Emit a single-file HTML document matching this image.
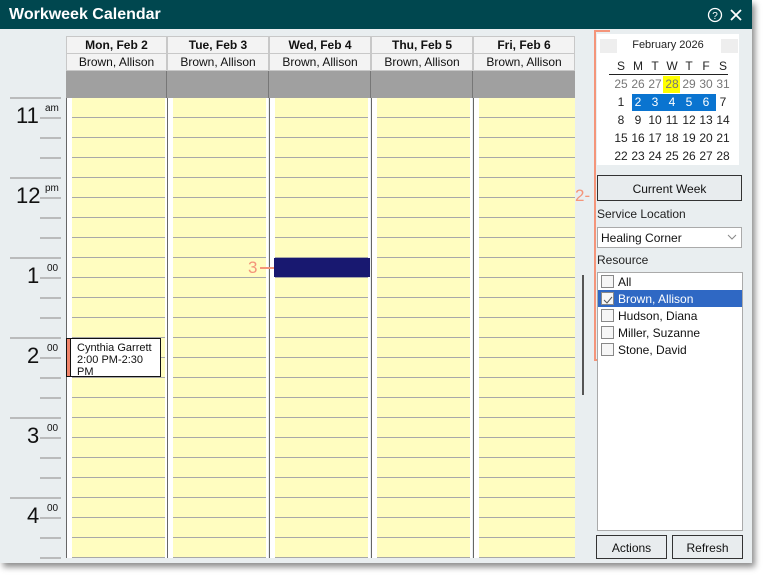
<!DOCTYPE html>
<html><head><style>
*{margin:0;padding:0;box-sizing:border-box}
body{width:765px;height:579px;background:#fff;font-family:"Liberation Sans",sans-serif;position:relative;overflow:hidden}
.win{position:absolute;left:0;top:0;width:752px;height:563px;background:#e9eef0;box-shadow:3px 4px 6px rgba(0,0,0,.45)}
.title{position:absolute;left:0;top:0;width:752px;height:29px;background:#00474f;color:#fff;font-weight:bold;font-size:16px;padding:6px 9px}
.a{position:absolute}
.hd{position:absolute;background:#f3f3f3;border:1px solid #c8c8c8;font-size:12px;text-align:center;color:#111}
.col{position:absolute;top:98px;height:460px;width:101px;background:#fff;border-left:1px solid #666}
.col .y{position:absolute;left:5px;right:2px;top:0;bottom:0;background:repeating-linear-gradient(#a8a8a8 0 1px,#fffdc0 1px 20px);background-position:0 -1px}
.btn{position:absolute;background:#e8ecee;border:1px solid #333;font-size:12px;text-align:center;color:#111}
.cal{position:absolute;left:597px;top:34px;width:142px;height:131px;background:#fff;font-size:12px;color:#222}
.cal span{position:absolute;width:20px;text-align:center}
.cb{position:absolute;left:3px;width:13px;height:13px;border:1px solid #888;background:#f6f6f6}
.li{position:absolute;left:0;width:144px;height:17px;font-size:12px;padding:2px 0 0 20px;color:#111}
</style></head><body>
<div class="win">
<div class="title">Workweek Calendar</div>
<svg class="a" style="left:707px;top:7px" width="36" height="16"><circle cx="8" cy="8" r="6.5" fill="none" stroke="#fff" stroke-width="1.3"/><text x="8" y="12" font-size="10" fill="#fff" text-anchor="middle" font-family="Liberation Sans">?</text><path d="M24 3l10 10M34 3l-10 10" stroke="#fff" stroke-width="1.8"/></svg>

<div class="hd" style="left:66px;top:36px;width:101px;height:18px;font-weight:bold;padding-top:1px">Mon, Feb 2</div>
<div class="hd" style="left:167px;top:36px;width:102px;height:18px;font-weight:bold;padding-top:1px">Tue, Feb 3</div>
<div class="hd" style="left:269px;top:36px;width:102px;height:18px;font-weight:bold;padding-top:1px">Wed, Feb 4</div>
<div class="hd" style="left:371px;top:36px;width:102px;height:18px;font-weight:bold;padding-top:1px">Thu, Feb 5</div>
<div class="hd" style="left:473px;top:36px;width:102px;height:18px;font-weight:bold;padding-top:1px">Fri, Feb 6</div>
<div class="hd" style="left:66px;top:53px;width:101px;height:18px;padding-top:1px">Brown, Allison</div>
<div class="hd" style="left:167px;top:53px;width:102px;height:18px;padding-top:1px">Brown, Allison</div>
<div class="hd" style="left:269px;top:53px;width:102px;height:18px;padding-top:1px">Brown, Allison</div>
<div class="hd" style="left:371px;top:53px;width:102px;height:18px;padding-top:1px">Brown, Allison</div>
<div class="hd" style="left:473px;top:53px;width:102px;height:18px;padding-top:1px">Brown, Allison</div>
<div class="a" style="left:66px;top:71px;width:509px;height:27px;background:#a0a0a0"></div>
<div class="a" style="left:166px;top:71px;width:1px;height:27px;background:#777"></div>
<div class="a" style="left:268px;top:71px;width:1px;height:27px;background:#777"></div>
<div class="a" style="left:370px;top:71px;width:1px;height:27px;background:#777"></div>
<div class="a" style="left:472px;top:71px;width:1px;height:27px;background:#777"></div>

<div class="col" style="left:66px"><div class="y"></div></div>
<div class="col" style="left:167px"><div class="y"></div></div>
<div class="col" style="left:269px"><div class="y"></div></div>
<div class="col" style="left:371px"><div class="y"></div></div>
<div class="col" style="left:473px;width:102px"><div class="y" style="right:0"></div></div>

<svg class="a" style="left:0;top:90px" width="66" height="470">
<g stroke="#aaa" stroke-width="1.5">
<path d="M10 8H61M10 88H61M10 168H61M10 248H61M10 328H61M10 408H61"/>
<path d="M40 28H61M40 48H61M40 68H61M40 108H61M40 128H61M40 148H61M40 188H61M40 208H61M40 228H61M40 268H61M40 288H61M40 308H61M40 348H61M40 368H61M40 388H61M40 428H61M40 448H61M40 468H61"/>
</g>
<g font-family="Liberation Sans" fill="#111">
<text x="16" y="33" font-size="22">11</text><text x="45" y="21" font-size="10">am</text>
<text x="16" y="113" font-size="22">12</text><text x="45" y="101" font-size="10">pm</text>
<text x="27" y="193" font-size="22">1</text><text x="47" y="181" font-size="10">00</text>
<text x="27" y="273" font-size="22">2</text><text x="47" y="261" font-size="10">00</text>
<text x="27" y="353" font-size="22">3</text><text x="47" y="341" font-size="10">00</text>
<text x="27" y="433" font-size="22">4</text><text x="47" y="421" font-size="10">00</text>
</g></svg>

<div class="a" style="left:66px;top:338px;width:95px;height:39px;background:#fff;border:1px solid #111;font-size:11px;line-height:12px;padding:3px 0 0 10px;color:#111;overflow:hidden">Cynthia Garrett<br>2:00 PM-2:30<br>PM</div>
<div class="a" style="left:66px;top:338px;width:5px;height:39px;background:#f0846a;border:1px solid #111"></div>
<div class="a" style="left:274px;top:258px;width:96px;height:19px;background:#181870"></div>
<div class="a" style="left:248px;top:258px;font-size:17px;color:#f4957a">3</div>
<div class="a" style="left:260px;top:267px;width:14px;height:2px;background:#f4957a"></div>

<div class="a" style="left:582px;top:275px;width:2px;height:120px;background:#555"></div>

<div class="a" style="left:594px;top:30px;width:2px;height:331px;background:#f4957a"></div>
<div class="a" style="left:594px;top:30px;width:16px;height:2px;background:#f4957a"></div>
<div class="a" style="left:594px;top:359px;width:16px;height:2px;background:#f4957a"></div>
<div class="a" style="left:575px;top:186px;font-size:17px;color:#f4957a">2-</div>

<div class="cal">
<div class="a" style="left:3px;top:5px;width:17px;height:14px;background:#eee"></div>
<div class="a" style="left:124px;top:5px;width:17px;height:14px;background:#eee"></div>
<div class="a" style="left:0;top:5px;width:142px;text-align:center;font-size:11px">February 2026</div>
<div class="a" style="left:12px;top:40px;width:119px;height:1px;background:#222"></div>
<div class="a" style="left:66px;top:42px;width:17px;height:17px;background:#ffff00"></div>
<div class="a" style="left:35px;top:60px;width:84px;height:17px;background:#0a74d0"></div>
<div style="position:absolute;left:0;top:0">
<span style="left:14px;top:25px">S</span><span style="left:31px;top:25px">M</span><span style="left:48px;top:25px">T</span><span style="left:65px;top:25px">W</span><span style="left:82px;top:25px">T</span><span style="left:99px;top:25px">F</span><span style="left:116px;top:25px">S</span>
<span style="left:14px;top:43px;color:#777">25</span><span style="left:31px;top:43px;color:#777">26</span><span style="left:48px;top:43px;color:#777">27</span><span style="left:65px;top:43px;color:#777">28</span><span style="left:82px;top:43px;color:#777">29</span><span style="left:99px;top:43px;color:#777">30</span><span style="left:116px;top:43px;color:#777">31</span>
<span style="left:14px;top:61px">1</span><span style="left:31px;top:61px;color:#fff">2</span><span style="left:48px;top:61px;color:#fff">3</span><span style="left:65px;top:61px;color:#fff">4</span><span style="left:82px;top:61px;color:#fff">5</span><span style="left:99px;top:61px;color:#fff">6</span><span style="left:116px;top:61px">7</span>
<span style="left:14px;top:79px">8</span><span style="left:31px;top:79px">9</span><span style="left:48px;top:79px">10</span><span style="left:65px;top:79px">11</span><span style="left:82px;top:79px">12</span><span style="left:99px;top:79px">13</span><span style="left:116px;top:79px">14</span>
<span style="left:14px;top:97px">15</span><span style="left:31px;top:97px">16</span><span style="left:48px;top:97px">17</span><span style="left:65px;top:97px">18</span><span style="left:82px;top:97px">19</span><span style="left:99px;top:97px">20</span><span style="left:116px;top:97px">21</span>
<span style="left:14px;top:115px">22</span><span style="left:31px;top:115px">23</span><span style="left:48px;top:115px">24</span><span style="left:65px;top:115px">25</span><span style="left:82px;top:115px">26</span><span style="left:99px;top:115px">27</span><span style="left:116px;top:115px">28</span>
</div></div>

<div class="btn" style="left:597px;top:175px;width:145px;height:26px;padding-top:6px">Current Week</div>
<div class="a" style="left:597px;top:207px;font-size:12px;color:#222">Service Location</div>
<div class="a" style="left:597px;top:227px;width:145px;height:21px;background:#fff;border:1px solid #aaa;font-size:12px;padding:3px 0 0 3px;color:#111">Healing Corner</div>
<svg class="a" style="left:727px;top:233px" width="10" height="8"><path d="M1 2l4 4 4-4" fill="none" stroke="#888"/></svg>
<div class="a" style="left:597px;top:253px;font-size:12px;color:#222">Resource</div>
<div class="a" style="left:597px;top:272px;width:146px;height:259px;background:#fff;border:1px solid #aaa">
<div class="li" style="top:0">All</div><div class="cb" style="top:2px"></div>
<div class="li" style="top:17px;background:#2f68c4;color:#fff">Brown, Allison</div><div class="cb" style="top:19px"></div>
<svg class="a" style="left:5px;top:23px" width="10" height="8"><path d="M1 4l3 3 5-6" fill="none" stroke="#555"/></svg>
<div class="li" style="top:34px">Hudson, Diana</div><div class="cb" style="top:36px"></div>
<div class="li" style="top:51px">Miller, Suzanne</div><div class="cb" style="top:53px"></div>
<div class="li" style="top:68px">Stone, David</div><div class="cb" style="top:70px"></div>
</div>
<div class="btn" style="left:596px;top:535px;width:71px;height:24px;padding-top:5px">Actions</div>
<div class="btn" style="left:672px;top:535px;width:71px;height:24px;padding-top:5px">Refresh</div>
</div>
</body></html>
